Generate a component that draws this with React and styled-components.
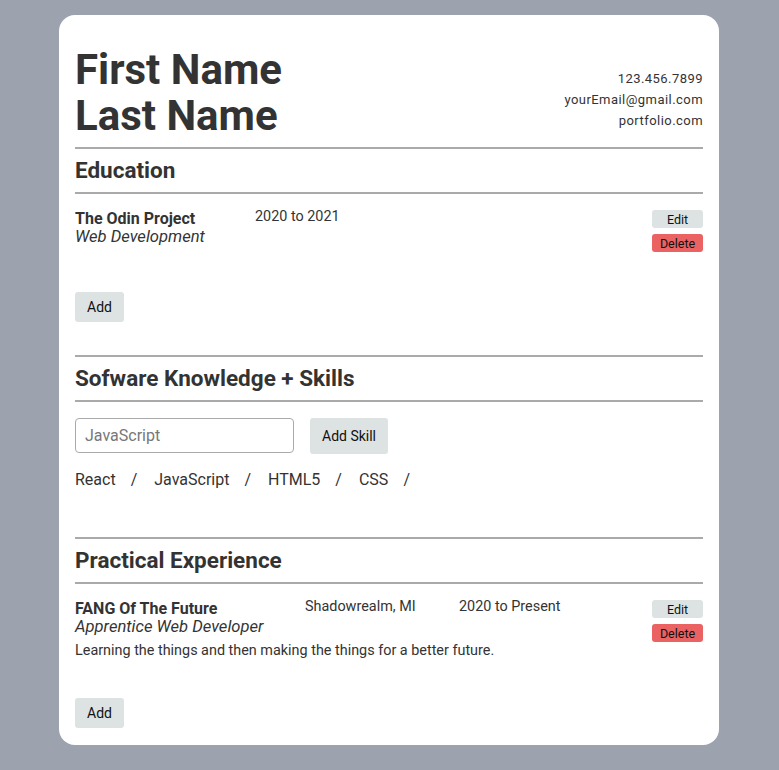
import React, { useState } from "react";
import styled, { createGlobalStyle } from "styled-components";

const GlobalStyle = createGlobalStyle`
  body {
    margin: 0;
    background: #9ca3af;
    font-family: Roboto, "Liberation Sans", sans-serif;
    color: #333;
  }
`;

const Page = styled.div`
  padding: 15px 1px 26px 0;
  display: flex;
  justify-content: center;
`;

const Card = styled.div`
  width: 660px;
  box-sizing: border-box;
  background: #fff;
  border-radius: 16px;
  padding: 32px 16px 17px;
`;

const Header = styled.header`
  display: flex;
  justify-content: space-between;
  align-items: flex-end;
`;

const Name = styled.h1`
  margin: 0;
  font-size: 42px;
  line-height: 46px;
  font-weight: 700;
  color: #333;
`;

const Contact = styled.div`
  text-align: right;
  font-size: 13px;
  line-height: 21px;
  letter-spacing: 0.45px;
  margin-bottom: 8px;
`;

const Rule = styled.div`
  height: 2px;
  background: #aaa;
  margin-top: ${(p) => p.$top || 0}px;
`;

const SectionTitle = styled.h2`
  margin: 0;
  font-size: 22.5px;
  line-height: 28px;
  font-weight: 700;
  padding: 7px 0 8px;
`;

const Entry = styled.div`
  display: flex;
  align-items: flex-start;
  margin-top: 15px;
`;

const EntryInfo = styled.div`
  flex: 1;
`;

const EntryRow = styled.div`
  display: flex;
`;

const Col = styled.div`
  width: ${(p) => p.$w}px;
  flex-shrink: 0;
`;

const Title = styled.div`
  font-size: 16px;
  line-height: 18px;
  font-weight: 700;
  padding-top: 1px;
`;

const Subtitle = styled.div`
  font-size: 16.6px;
  line-height: 18px;
  font-style: italic;
`;

const Meta = styled.div`
  font-size: 14.4px;
  line-height: 16px;
`;

const Description = styled.p`
  margin: 6px 0 0;
  font-size: 14.4px;
  line-height: 17px;
`;

const Actions = styled.div`
  display: flex;
  flex-direction: column;
  gap: 6px;
  padding-top: 1px;
`;

const SmallButton = styled.button`
  width: 51px;
  height: 18px;
  padding: 0;
  border: none;
  border-radius: 3px;
  font-family: inherit;
  font-size: 12.5px;
  color: #111;
  background: ${(p) => (p.$danger ? "#ea6262" : "#dde2e2")};
`;

const Button = styled.button`
  height: ${(p) => p.$h || 30}px;
  padding: 0 12px;
  border: none;
  border-radius: 3px;
  font-family: inherit;
  font-size: 14px;
  color: #111;
  background: #dde2e2;
`;

const AddWrap = styled.div`
  margin-top: ${(p) => p.$top}px;
`;

const SkillForm = styled.div`
  display: flex;
  gap: 16px;
  margin-top: 16px;
`;

const Input = styled.input`
  width: 219px;
  height: 35px;
  box-sizing: border-box;
  border: 1px solid #aaa;
  border-radius: 4px;
  padding: 0 9px;
  font-family: inherit;
  font-size: 16px;
  color: #333;
  &::placeholder {
    color: #777;
  }
`;

const SkillList = styled.div`
  display: flex;
  font-size: 16px;
  line-height: 19px;
  margin-top: 16px;
  margin-bottom: 48px;
`;

const Skill = styled.span`
  &::after {
    content: "/";
    margin: 0 17px 0 15px;
  }
`;

export default function App() {
  const [skills] = useState(["React", "JavaScript", "HTML5", "CSS"]);

  return (
    <>
      <GlobalStyle />
      <Page>
        <Card>
          <Header>
            <Name>
              First Name
              <br />
              Last Name
            </Name>
            <Contact>
              <div>123.456.7899</div>
              <div>yourEmail@gmail.com</div>
              <div>portfolio.com</div>
            </Contact>
          </Header>

          <Rule $top={8} />
          <SectionTitle>Education</SectionTitle>
          <Rule />
          <Entry>
            <EntryInfo>
              <EntryRow>
                <Col $w={180}>
                  <Title>The Odin Project</Title>
                  <Subtitle>Web Development</Subtitle>
                </Col>
                <Col $w={150}>
                  <Meta>2020 to 2021</Meta>
                </Col>
              </EntryRow>
            </EntryInfo>
            <Actions>
              <SmallButton>Edit</SmallButton>
              <SmallButton $danger>Delete</SmallButton>
            </Actions>
          </Entry>
          <AddWrap $top={40}>
            <Button>Add</Button>
          </AddWrap>

          <Rule $top={33} />
          <SectionTitle>Sofware Knowledge + Skills</SectionTitle>
          <Rule />
          <SkillForm>
            <Input placeholder="JavaScript" />
            <Button $h={36}>Add Skill</Button>
          </SkillForm>
          <SkillList>
            {skills.map((s) => (
              <Skill key={s}>{s}</Skill>
            ))}
          </SkillList>

          <Rule />
          <SectionTitle>Practical Experience</SectionTitle>
          <Rule />
          <Entry>
            <EntryInfo>
              <EntryRow>
                <Col $w={230}>
                  <Title>FANG Of The Future</Title>
                  <Subtitle>Apprentice Web Developer</Subtitle>
                </Col>
                <Col $w={154}>
                  <Meta>Shadowrealm, MI</Meta>
                </Col>
                <Col $w={150}>
                  <Meta>2020 to Present</Meta>
                </Col>
              </EntryRow>
              <Description>
                Learning the things and then making the things for a better future.
              </Description>
            </EntryInfo>
            <Actions>
              <SmallButton>Edit</SmallButton>
              <SmallButton $danger>Delete</SmallButton>
            </Actions>
          </Entry>
          <AddWrap $top={39}>
            <Button>Add</Button>
          </AddWrap>
        </Card>
      </Page>
    </>
  );
}
